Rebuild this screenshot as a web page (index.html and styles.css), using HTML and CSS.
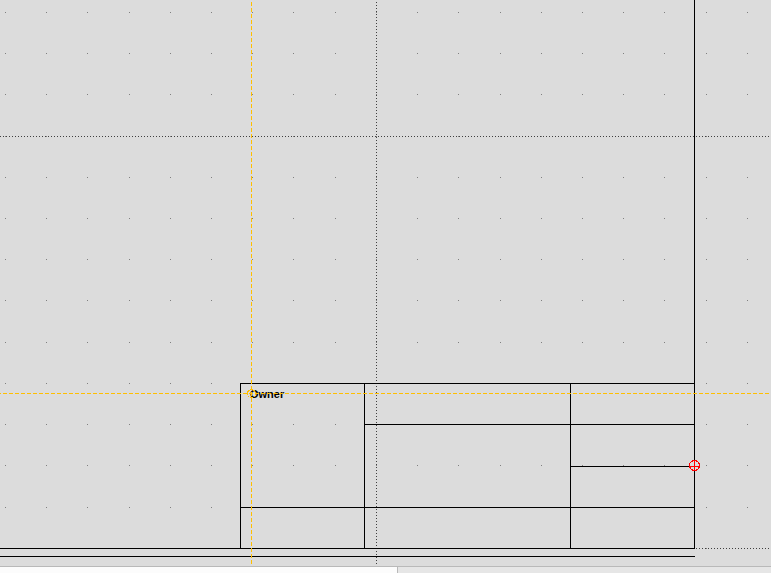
FILE: index.html
```
<!DOCTYPE html>
<html lang="en">
<head>
<meta charset="utf-8">
<title>Drawing sheet</title>
<link rel="stylesheet" href="styles.css">
</head>
<body>
<main class="canvas">
<svg class="sheet" role="img" aria-label="Title block drawing">
  <g id="grid" class="grid"></g>
  <g class="major">
    <path d="M0 136.5H4000"/>
    <path d="M376.5 2V564"/>
    <path d="M696 548.5H4000"/>
  </g>
  <g class="ink">
    <path d="M694.5 0V549M0 548.5H695M0 556.5H695"/>
    <path d="M240.5 549V383.5H695M364.5 383V549M570.5 383V549"/>
    <path d="M364 424.5H695M570 466.5H695M240 507.5H695"/>
  </g>
  <text class="label" x="250" y="398">Owner</text>
  <g class="cursor">
    <path stroke-dashoffset="4" d="M251.5 0V564"/>
    <path stroke-dashoffset="3" d="M0 393.5H4000"/>
    <circle cx="251.5" cy="393.5" r="4"/>
  </g>
  <g class="origin">
    <circle cx="694.5" cy="465.5" r="5"/>
    <path d="M689 466.5H700M694.5 460V471"/>
  </g>
</svg>
</main>
<footer class="tabs"><div class="tab active"></div><div class="tab"></div></footer>
<script src="grid.js"></script>
</body>
</html>
```
FILE: styles.css
```
body {
  margin: 0;
  height: 100vh;
  display: flex;
  flex-direction: column;
  overflow: hidden;
  background: #dcdcdc;
}
.canvas {
  flex: 1;
  min-height: 0;
  overflow: hidden;
}
.sheet {
  display: block;
  width: 100%;
  height: 100%;
  fill: none;
  stroke-width: 1px;
  shape-rendering: crispEdges;
}
.grid { fill: #808080; }
.major { stroke: #404040; stroke-dasharray: 1 2; }
.ink { stroke: #000; }
.cursor { stroke: #ffbf00; }
.cursor path { stroke-dasharray: 4 2; }
.origin { stroke: #f00; }
.label {
  fill: #000;
  font: bold 11px "Liberation Sans", sans-serif;
}
.tabs {
  display: flex;
  height: 6px;
  border-top: 1px solid #b9b9b9;
  background: #e6e6e6;
}
.tab {
  box-sizing: border-box;
  flex: 373;
}
.tab.active {
  flex: 398;
  background: #fcfcfc;
  border-right: 1px solid #b9b9b9;
}
```
FILE: grid.js
```
const grid = document.getElementById("grid");
const step = 41.21;
for (let row = 0; row < 14; row++) {
  for (let col = 0; col < 60; col++) {
    const dot = document.createElementNS("http://www.w3.org/2000/svg", "rect");
    dot.setAttribute("x", Math.round(5 + col * step));
    dot.setAttribute("y", Math.round(12 + row * step));
    dot.setAttribute("width", 1);
    dot.setAttribute("height", 1);
    grid.append(dot);
  }
}
```
